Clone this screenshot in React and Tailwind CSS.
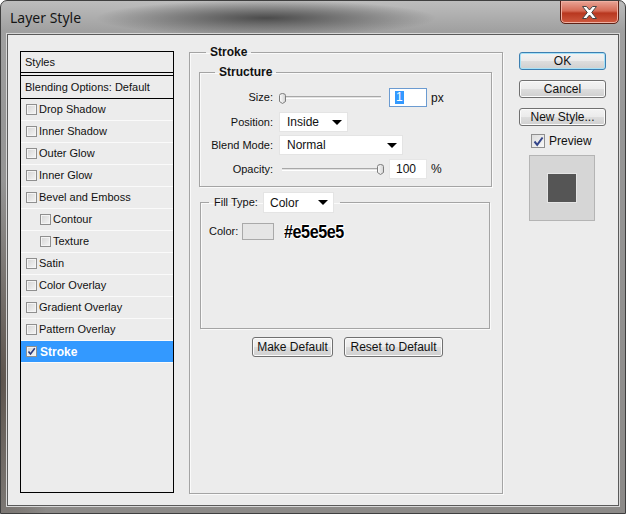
import React from "react";

const styleRows = [
  { label: "Drop Shadow" },
  { label: "Inner Shadow" },
  { label: "Outer Glow" },
  { label: "Inner Glow" },
  { label: "Bevel and Emboss" },
  { label: "Contour", sub: true },
  { label: "Texture", sub: true },
  { label: "Satin" },
  { label: "Color Overlay" },
  { label: "Gradient Overlay" },
  { label: "Pattern Overlay" },
];

function Box({ checked }) {
  return (
    <span className="w-[11px] h-[11px] shrink-0 border border-[#8f8f8f] bg-[linear-gradient(135deg,#d4d4d4,#f6f6f6)] shadow-[inset_0_0_0_1px_#f4f4f4] flex items-center justify-center">
      {checked && (
        <svg width="9" height="9" viewBox="0 0 9 9">
          <path d="M1.5 4.5 L3.5 7 L7.8 1.2" fill="none" stroke="#2b3a7c" strokeWidth="1.6" />
        </svg>
      )}
    </span>
  );
}

function Arrow() {
  return (
    <svg width="10" height="5" viewBox="0 0 10 5">
      <path d="M0 0 H10 L5 5 Z" fill="#000" />
    </svg>
  );
}

function Select({ value, width }) {
  return (
    <div className={`${width} h-[20px] bg-white border border-[#e4e4e4] flex items-center justify-between pl-[7px] pr-[5px] text-[12px] text-[#111]`}>
      <span>{value}</span>
      <Arrow />
    </div>
  );
}

function Thumb() {
  return (
    <svg width="7" height="11" viewBox="0 0 7 11">
      <defs>
        <linearGradient id="tg" x1="0" x2="1">
          <stop offset="0" stopColor="#fdfdfd" />
          <stop offset="1" stopColor="#d2d2d2" />
        </linearGradient>
      </defs>
      <path d="M0.5 2.5 Q0.5 0.5 3.5 0.5 Q6.5 0.5 6.5 2.5 V8.5 L3.5 10.5 L0.5 8.5 Z" fill="url(#tg)" stroke="#7d7d7d" />
    </svg>
  );
}

function Slider({ right }) {
  return (
    <div className="relative w-[104px] h-[12px] flex items-center">
      <div className="ml-[3px] w-[99px] h-[3px] border-t border-[#a8a8a8] bg-[#e2e2e2] border-b border-b-white" />
      <div className={`absolute top-[1px] ${right ? "left-[98px]" : "left-0"}`}>
        <Thumb />
      </div>
    </div>
  );
}

function WinButton({ children, width, primary }) {
  return (
    <button
      className={`${width} h-[18px] rounded-[3px] border ${
        primary ? "border-[#3c7fb1] shadow-[inset_0_0_0_1px_#a6e1f7]" : "border-[#707070] shadow-[inset_0_0_0_1px_#fbfbfb]"
      } bg-[linear-gradient(180deg,#f3f3f3_0%,#ebebeb_48%,#dddddd_52%,#cfcfcf_100%)] flex items-center justify-center text-[12px] text-[#111] leading-none`}
    >
      {children}
    </button>
  );
}

export default function App() {
  return (
    <div className="w-[626px] h-[514px] flex flex-col overflow-hidden rounded-t-[7px] border border-[#3f3f3f] bg-[radial-gradient(170px_18px_at_265px_17px,#4b4b4b,transparent),radial-gradient(60px_200px_at_0px_380px,#5d544d,transparent),linear-gradient(180deg,#bdbdbd_0px,#a0a0a0_30px,#979797_120px,#8c8a88_100%)] font-['Liberation_Sans',Arial,sans-serif] text-[#111]">
      {/* title bar */}
      <div className="h-[33px] flex items-start shrink-0">
        <span className="ml-[9px] mt-[8px] text-[14px] leading-[18px] text-[#151515] font-['Noto_Sans',sans-serif]">Layer Style</span>
        <div className="ml-auto mr-[6px] mt-[-1px] w-[59px] h-[24px] rounded-b-[5px] border border-[#5e2216] bg-[linear-gradient(180deg,#e9a597_0%,#d56a55_45%,#b8371f_55%,#cf5a40_100%)] shadow-[inset_0_0_0_1px_#f0b0a2] flex items-center justify-center">
          <svg width="15" height="13" viewBox="0 0 15 13">
            <path d="M0.5 0.5 H4.5 L7.5 4 L10.5 0.5 H14.5 L9.7 6.5 L14.5 12.5 H10.5 L7.5 9 L4.5 12.5 H0.5 L5.3 6.5 Z" fill="#fff" stroke="#444" strokeWidth="1" />
          </svg>
        </div>
      </div>

      {/* dialog body */}
      <div className="ml-[6px] mr-[6px] mb-[7px] flex-1 border border-[#5a5a5a] bg-[#ececec] shadow-[0_0_0_1px_#d8d8d8] flex items-start">
        {/* styles list */}
        <div className="mt-[16px] ml-[12px] w-[154px] h-[442px] border border-black flex flex-col text-[11px]">
          <div className="h-[24px] shrink-0 border-b-4 border-double border-black flex items-center pl-[4px]">Styles</div>
          <div className="h-[23px] shrink-0 border-b border-black flex items-center pl-[4px]">Blending Options: Default</div>
          {styleRows.map((r) => (
            <div key={r.label} className={`h-[22px] shrink-0 border-b border-[#fafafa] flex items-center gap-[2px] ${r.sub ? "pl-[19px]" : "pl-[5px]"}`}>
              <Box />
              <span>{r.label}</span>
            </div>
          ))}
          <div className="h-[22px] shrink-0 border-b border-[#fafafa] bg-[#3399ff] flex items-center gap-[3px] pl-[5px]">
            <span className="bg-white"><Box checked /></span>
            <span className="text-white font-bold text-[12px]">Stroke</span>
          </div>
        </div>

        {/* stroke settings */}
        <fieldset className="mt-[10px] ml-[15px] w-[314px] h-[449px] border border-[#a4a4a4] shadow-[inset_1px_1px_0_#fafafa,1px_1px_0_#fafafa]">
          <legend className="ml-[16px] px-[4px] text-[12px] leading-[14px] font-bold">Stroke</legend>

          <fieldset className="mt-[6px] ml-[9px] w-[293px] h-[122px] border border-[#a4a4a4] shadow-[inset_1px_1px_0_#fafafa,1px_1px_0_#fafafa]">
            <legend className="ml-[15px] px-[4px] text-[12px] leading-[14px] font-bold">Structure</legend>
            <div className="mt-[9px] flex flex-col text-[11px]">
              <div className="h-[19px] flex items-center">
                <span className="w-[73px] text-right">Size:</span>
                <div className="ml-[6px]"><Slider /></div>
                <div className="ml-[6px] w-[38px] h-[19px] bg-white border border-[#6b9bd1] flex items-center pl-[5px]">
                  <span className="bg-[#3399ff] text-white text-[12px] leading-[13px] px-[1px]">1</span>
                </div>
                <span className="ml-[4px] text-[12px]">px</span>
              </div>
              <div className="mt-[5px] h-[20px] flex items-center">
                <span className="w-[73px] text-right">Position:</span>
                <div className="ml-[6px]"><Select value="Inside" width="w-[69px]" /></div>
              </div>
              <div className="mt-[3px] h-[20px] flex items-center">
                <span className="w-[73px] text-right">Blend Mode:</span>
                <div className="ml-[6px]"><Select value="Normal" width="w-[124px]" /></div>
              </div>
              <div className="mt-[4px] h-[20px] flex items-center">
                <span className="w-[73px] text-right">Opacity:</span>
                <div className="ml-[6px]"><Slider right /></div>
                <div className="ml-[6px] w-[38px] h-[20px] bg-white border border-[#e6e6e6] flex items-center pl-[6px] text-[12px]">100</div>
                <span className="ml-[4px] text-[12px]">%</span>
              </div>
            </div>
          </fieldset>

          <fieldset className="mt-[5px] ml-[10px] w-[290px] h-[137px] border border-[#a4a4a4] shadow-[inset_1px_1px_0_#fafafa,1px_1px_0_#fafafa]">
            <legend className="ml-[8px] pl-[5px] pr-[6px]">
              <div className="flex items-center h-[21px]">
                <span className="w-[49px] text-[11px]">Fill Type:</span>
                <div className="w-[71px] h-[21px] bg-white border border-[#e4e4e4] flex items-center justify-between pl-[6px] pr-[5px] text-[12px]">
                  <span>Color</span>
                  <Arrow />
                </div>
              </div>
            </legend>
            <div className="mt-[10px] ml-[8px] h-[17px] flex items-center">
              <span className="w-[33px] text-[11px]">Color:</span>
              <div className="w-[32px] h-[17px] bg-[#e5e5e5] border border-[#a9a9a9]" />
              <span className="ml-[10px] inline-block origin-left scale-x-[0.85] text-[19px] leading-[17px] font-black tracking-[-0.5px] text-black [text-shadow:-1px_0_#fff,1px_0_#fff,0_1px_#fff,0_-1px_#fff,1px_1px_#fff,-1px_-1px_#fff]">
                #e5e5e5
              </span>
            </div>
          </fieldset>

          <div className="mt-[8px] ml-[3px] flex justify-center gap-[11px]">
            <WinButton width="w-[81px] h-[20px] text-[11px]">Make Default</WinButton>
            <WinButton width="w-[99px] h-[20px] text-[11px]">Reset to Default</WinButton>
          </div>
        </fieldset>

        {/* right column */}
        <div className="mt-[17px] ml-[16px] w-[87px] flex flex-col">
          <WinButton width="w-[87px]" primary>OK</WinButton>
          <div className="mt-[10px]"><WinButton width="w-[87px]">Cancel</WinButton></div>
          <div className="mt-[10px]"><WinButton width="w-[87px]">New Style...</WinButton></div>
          <div className="mt-[8px] ml-[12px] h-[14px] flex items-center gap-[4px]">
            <span className="w-[14px] h-[14px] border border-[#8f8f8f] bg-[linear-gradient(135deg,#dcdcdc,#f8f8f8)] flex items-center justify-center">
              <svg width="11" height="11" viewBox="0 0 11 11">
                <path d="M1.5 5.5 L4.2 8.8 L9.6 1.5" fill="none" stroke="#33458a" strokeWidth="2" />
              </svg>
            </span>
            <span className="text-[12px]">Preview</span>
          </div>
          <div className="mt-[7px] ml-[10px] w-[66px] h-[66px] bg-[#d6d6d6] border border-[#b4b4b4] flex items-center justify-center">
            <div className="w-[30px] h-[30px] bg-[#555555] border border-[#e5e5e5]" />
          </div>
        </div>
      </div>
    </div>
  );
}
